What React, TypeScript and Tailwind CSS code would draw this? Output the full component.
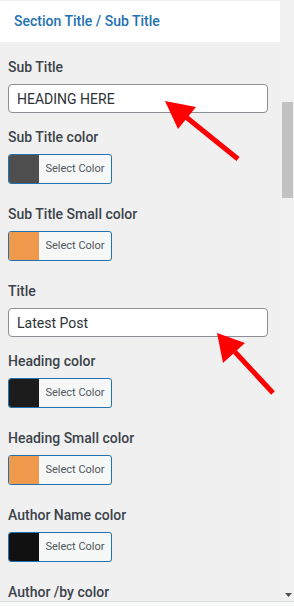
const fields = [
  { label: 'Sub Title', type: 'input', value: 'HEADING HERE' },
  { label: 'Sub Title color', type: 'color', value: '#4e4e4e' },
  { label: 'Sub Title Small color', type: 'color', value: '#ee994c' },
  { label: 'Title', type: 'input', value: 'Latest Post' },
  { label: 'Heading color', type: 'color', value: '#1c1c1c' },
  { label: 'Heading Small color', type: 'color', value: '#ee994c' },
  { label: 'Author Name color', type: 'color', value: '#111111' },
  { label: 'Author /by color', type: 'none', value: '' },
];

function ColorButton({ color }: { color: string }) {
  return (
    <button className="flex h-[30px] w-[104px] overflow-hidden rounded-[3px] border border-[#2271b1] bg-[#f6f7f7]">
      <span className="h-full w-[30px] shrink-0" style={{ backgroundColor: color }} />
      <span className="flex flex-1 items-center justify-center text-[11px] text-[#50575e]">
        Select Color
      </span>
    </button>
  );
}

export default function App() {
  return (
    <div className="relative flex h-[606px] w-[294px] flex-col overflow-hidden bg-[#f0f0f1] font-['Roboto','Liberation_Sans',sans-serif]">
      <div className="flex min-h-0 flex-1">
        {/* Panel */}
        <div className="flex min-w-0 flex-1 flex-col">
          <div className="mt-px flex h-[41px] w-[280px] shrink-0 items-center bg-white pl-[14px] text-[14px] font-medium text-[#2271b1]">
            Section Title / Sub Title
          </div>

          <div className="min-h-0 flex-1 overflow-hidden px-2 pt-[15px]">
            {fields.map((f) => (
              <div key={f.label} className={f.type === 'input' ? 'mb-[14px]' : 'mb-[20px]'}>
                <label className="block text-[14px] font-medium leading-5 text-[#3c434a]">
                  {f.label}
                </label>
                {f.type !== 'none' && (
                  <div className="mt-[7px]">
                    {f.type === 'input' ? (
                      <input
                        readOnly
                        value={f.value}
                        className="h-[29px] w-[260px] rounded-[4px] border border-[#8c8f94] bg-white px-2 text-[14px] text-[#2c3338] outline-none"
                      />
                    ) : (
                      <ColorButton color={f.value} />
                    )}
                  </div>
                )}
              </div>
            ))}
          </div>
        </div>

        {/* Scrollbar */}
        <div className="flex w-[13px] shrink-0 flex-col bg-[#f1f1f1]">
          <div className="ml-px mt-[102px] h-[96px] w-[11px] bg-[#c1c1c1]" />
          <div className="flex-1" />
          <div className="mb-[4px] flex justify-center pl-[2px]">
            <svg width="7" height="4" viewBox="0 0 7 4">
              <polygon points="0,0 7,0 3.5,4" fill="#505050" />
            </svg>
          </div>
        </div>
      </div>

      <div className="h-[5px] shrink-0 border-t border-[#dcdcde] bg-[#f6f7f7]" />

      {/* Annotation arrows */}
      <svg className="pointer-events-none absolute inset-0" width="294" height="606" viewBox="0 0 294 606">
        <line x1="238" y1="159" x2="186" y2="117" stroke="#ff0000" strokeWidth="5" />
        <polygon points="165,101 196,107 178,129" fill="#ff0000" />
        <line x1="273" y1="393" x2="235" y2="352" stroke="#ff0000" strokeWidth="5" />
        <polygon points="217,333 245,343 223,363" fill="#ff0000" />
      </svg>
    </div>
  );
}
